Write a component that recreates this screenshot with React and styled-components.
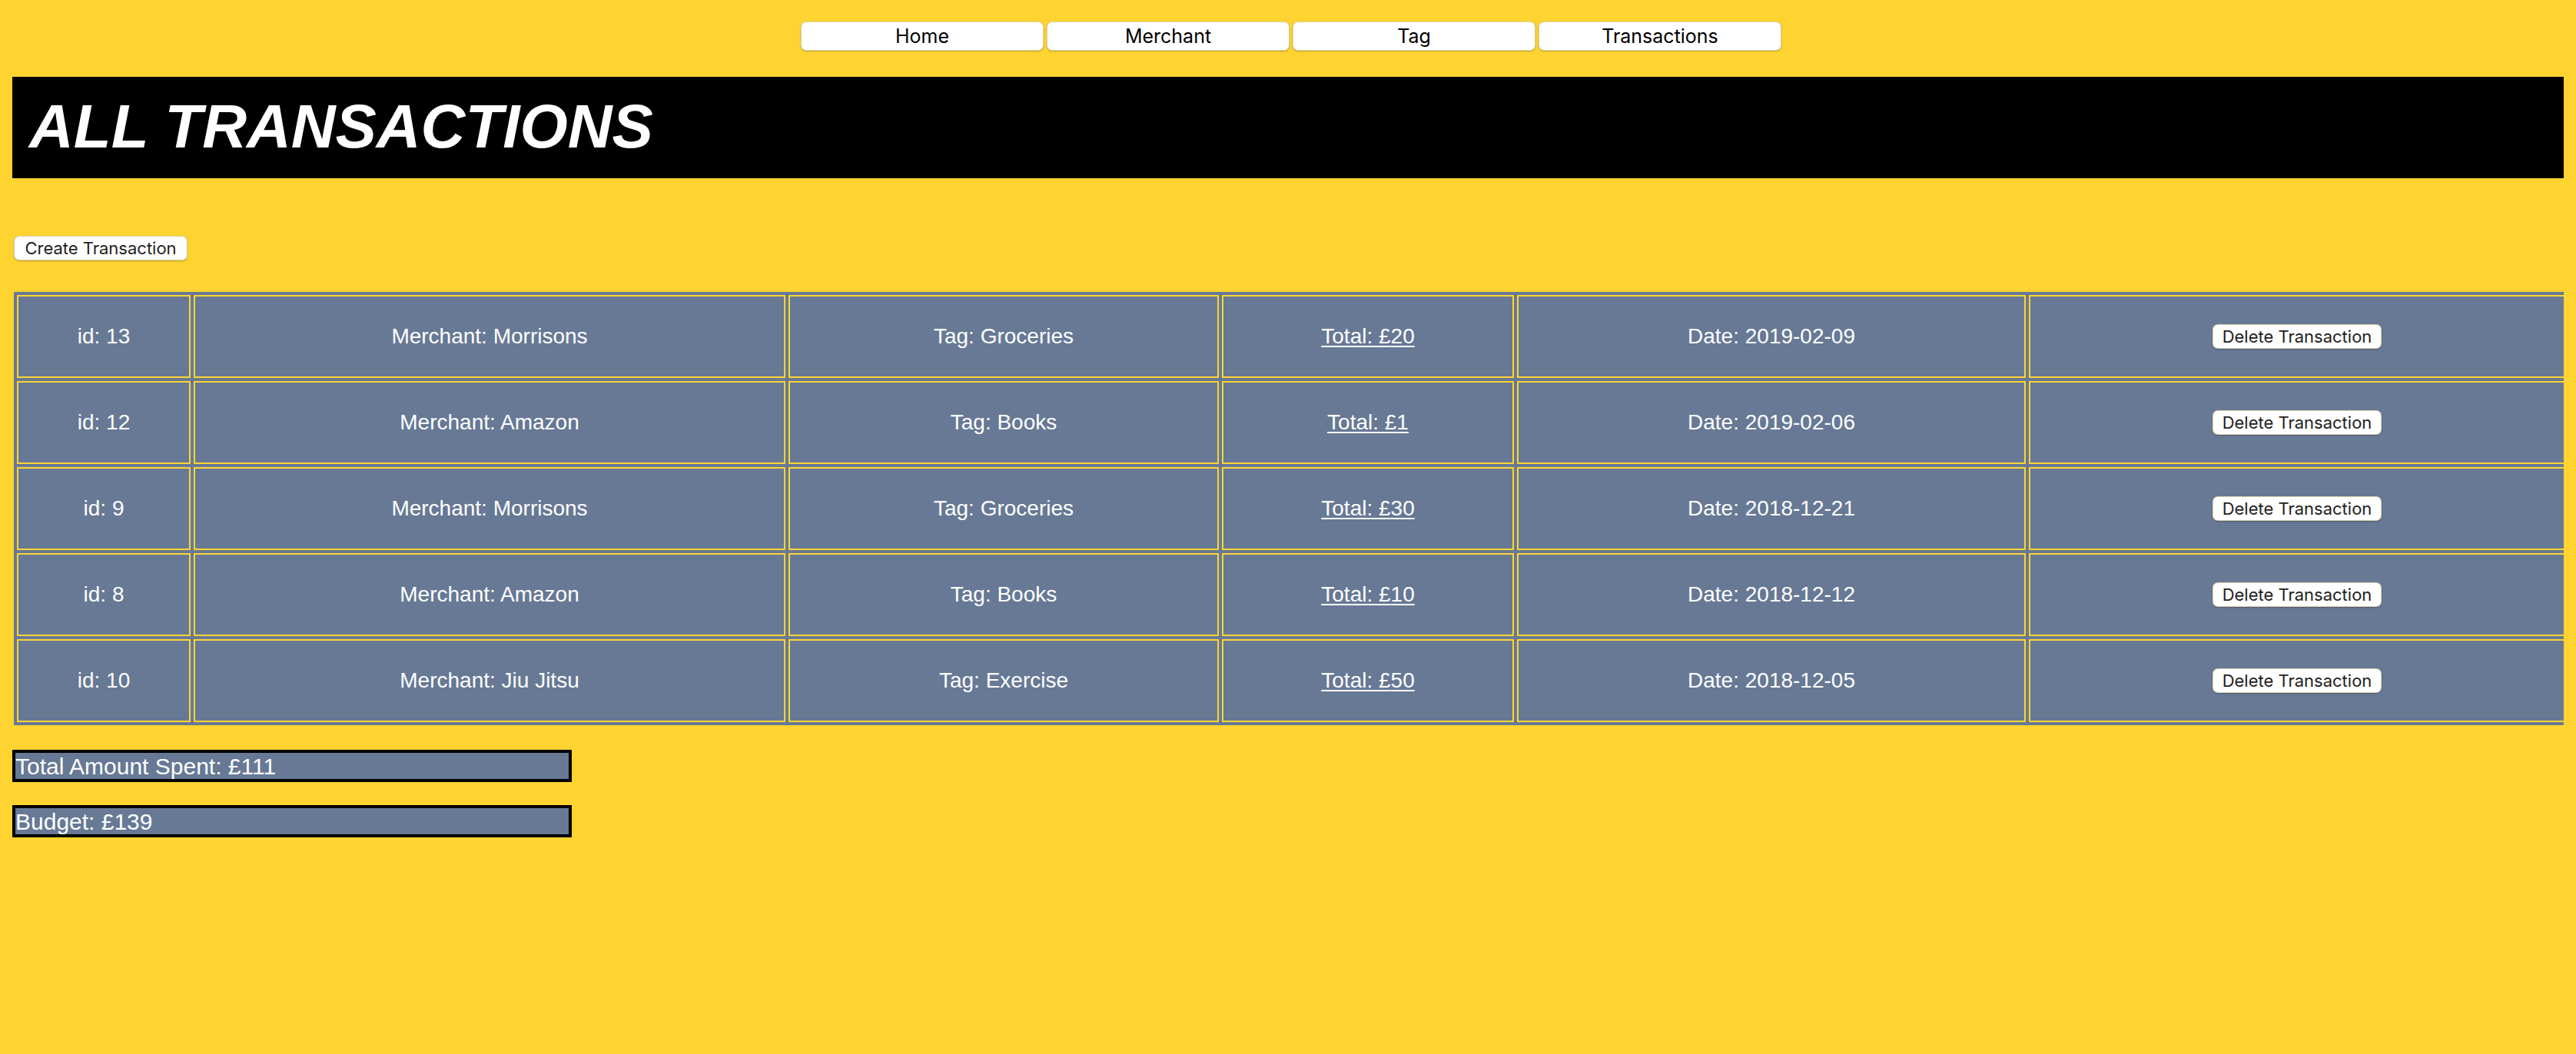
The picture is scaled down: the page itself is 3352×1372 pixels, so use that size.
import React from 'react';
import styled, { createGlobalStyle } from 'styled-components';

const yellow = '#ffd431';
const slate = '#677995';

const GlobalStyle = createGlobalStyle`
  body {
    margin: 16px;
    background: ${yellow};
    font-family: "Liberation Sans", Arial, Helvetica, sans-serif;
  }
`;

// top menu
const Nav = styled.nav`
  display: flex;
  justify-content: center;
  gap: 4px;
  padding: 12px 0 0 8px;
`;

const Button = styled.button`
  box-sizing: border-box;
  background: #ffffff;
  color: #222222;
  font-family: Inter, "Liberation Sans", sans-serif;
  font-size: 22px;
  white-space: nowrap;
  border: 1px solid rgba(150, 120, 20, 0.35);
  border-radius: 7px;
  box-shadow: 0 1px 2px rgba(0, 0, 0, 0.25);
  padding: 0 12px;
  height: 32px;
  cursor: pointer;
`;

const NavButton = styled(Button)`
  width: 316px;
  height: 38px;
  font-size: 25px;
  color: #000000;
`;

const Header = styled.header`
  display: flex;
  align-items: center;
  height: 132px;
  margin-top: 34px;
  padding: 0 0 3px 22px;
  box-sizing: border-box;
  background: #000000;
`;

const Title = styled.h1`
  margin: 0;
  color: #ffffff;
  font-size: 80px;
  line-height: 80px;
  font-weight: 700;
  font-style: italic;
`;

const CreateButton = styled(Button)`
  display: block;
  margin: 75px 0 0 2px;
  width: 226px;
  padding: 0;
`;

const Table = styled.div`
  display: grid;
  grid-template-columns: 226fr 770fr 560fr 380fr 662fr 698fr;
  grid-auto-rows: 108px;
  gap: 4px;
  padding: 4px;
  margin: 41px -6px 0 2px;
  background: ${slate};
`;

const Cell = styled.div`
  display: flex;
  align-items: center;
  justify-content: center;
  min-width: 0;
  border: 2px solid ${yellow};
  color: #ffffff;
  font-size: 28px;
  text-align: center;
`;

const TotalLink = styled.a`
  color: #ffffff;
  text-decoration: underline;
  text-underline-offset: 3px;
`;

const Summary = styled.div`
  box-sizing: border-box;
  width: 728px;
  height: 42px;
  margin-top: ${(props) => props.gap}px;
  padding-top: 1px;
  border: 4px solid #000000;
  background: ${slate};
  color: #ffffff;
  font-size: 30px;
  line-height: 33px;
`;

const transactions = [
  { id: 13, merchant: 'Morrisons', tag: 'Groceries', total: 20, date: '2019-02-09' },
  { id: 12, merchant: 'Amazon', tag: 'Books', total: 1, date: '2019-02-06' },
  { id: 9, merchant: 'Morrisons', tag: 'Groceries', total: 30, date: '2018-12-21' },
  { id: 8, merchant: 'Amazon', tag: 'Books', total: 10, date: '2018-12-12' },
  { id: 10, merchant: 'Jiu Jitsu', tag: 'Exercise', total: 50, date: '2018-12-05' },
];

function App() {
  const spent = transactions.reduce((sum, t) => sum + t.total, 0);

  return (
    <>
      <GlobalStyle />
      <Nav>
        {['Home', 'Merchant', 'Tag', 'Transactions'].map((item) => (
          <NavButton key={item}>{item}</NavButton>
        ))}
      </Nav>
      <Header>
        <Title>ALL TRANSACTIONS</Title>
      </Header>
      <CreateButton>Create Transaction</CreateButton>
      <Table>
        {transactions.map((t) => (
          <React.Fragment key={t.id}>
            <Cell>id: {t.id}</Cell>
            <Cell>Merchant: {t.merchant}</Cell>
            <Cell>Tag: {t.tag}</Cell>
            <Cell>
              <TotalLink href="#">Total: £{t.total}</TotalLink>
            </Cell>
            <Cell>Date: {t.date}</Cell>
            <Cell>
              <Button>Delete Transaction</Button>
            </Cell>
          </React.Fragment>
        ))}
      </Table>
      <Summary gap={32}>Total Amount Spent: £{spent}</Summary>
      <Summary gap={30}>Budget: £139</Summary>
    </>
  );
}

export default App;
